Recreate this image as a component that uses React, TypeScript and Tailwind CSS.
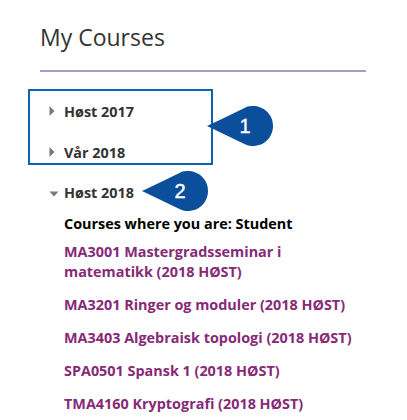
import React from "react";

const terms = [
  { label: "Høst 2017", open: false },
  { label: "Vår 2018", open: false },
  { label: "Høst 2018", open: true },
];

const courses = [
  "MA3001 Mastergradsseminar i matematikk (2018 HØST)",
  "MA3201 Ringer og moduler (2018 HØST)",
  "MA3403 Algebraisk topologi (2018 HØST)",
  "SPA0501 Spansk 1 (2018 HØST)",
  "TMA4160 Kryptografi (2018 HØST)",
];

function Caret({ open }: { open: boolean }) {
  return open ? (
    <svg width="10" height="6" viewBox="0 0 10 6" className="mt-[1px]">
      <path d="M0.5 0.5 L9.5 0.5 L5 5.5 Z" fill="#7a7a7a" />
    </svg>
  ) : (
    <svg width="6" height="10" viewBox="0 0 6 10" className="-mt-[2px]">
      <path d="M0.5 0 L5.5 5 L0.5 10 Z" fill="#7a7a7a" />
    </svg>
  );
}

function Callout({ n, className }: { n: string; className: string }) {
  // teardrop marker: tip at (1,21), circle centre (47,21), r 20
  return (
    <div className={`absolute h-[42px] w-[68px] ${className}`}>
      <svg width="68" height="42" viewBox="0 0 68 42" className="absolute inset-0">
        <path
          d="M1 21 Q 26 9 38.5 2.9 A 20 20 0 1 1 38.5 39.1 Q 26 33 1 21 Z"
          fill="#0b4e9c"
        />
      </svg>
      <span className="absolute left-[29px] top-[9px] w-[20px] text-center font-['Liberation_Sans',Arial,sans-serif] text-[20px] leading-[24px] text-white [-webkit-text-stroke:0.4px_white]">
        {n}
      </span>
    </div>
  );
}

export default function App() {
  return (
    <div className="relative h-[420px] w-[407px] overflow-hidden bg-white font-['Open_Sans',sans-serif]">
      <div className="w-[326px] ml-[40px]">
        <h2 className="border-b-2 border-[#a99cc7] pb-[18px] pt-[22px] text-[23px] font-normal leading-[30px] text-[#333333]">
          My Courses
        </h2>

        <div className="mt-[30px] flex flex-col gap-[20.5px]">
          {terms.map((t) => (
            <div key={t.label} className="flex h-[20px] items-center">
              <div className="flex w-[24px] items-center pl-[9px]">
                <Caret open={t.open} />
              </div>
              <span className="text-[14.4px] font-bold leading-[20px] text-[#333333]">{t.label}</span>
            </div>
          ))}
        </div>

        <div className="pl-[24px] pr-[8px]">
          <p className="mt-[11px] text-[14.4px] font-bold leading-[20px] text-black">
            Courses where you are: Student
          </p>
          <ul className="mt-[8px] flex flex-col gap-[13.5px]">
            {courses.map((c) => (
              <li key={c} className="text-[14.4px] font-bold leading-[19.5px]">
                <a href="#" className="text-[#862a78]">
                  {c}
                </a>
              </li>
            ))}
          </ul>
        </div>
      </div>

      {/* annotation overlays */}
      <div className="absolute left-[28px] top-[89px] h-[76px] w-[185px] border-2 border-[#0d63b0]" />
      <Callout n="1" className="left-[206px] top-[105px]" />
      <Callout n="2" className="left-[141px] top-[170px]" />
    </div>
  );
}
